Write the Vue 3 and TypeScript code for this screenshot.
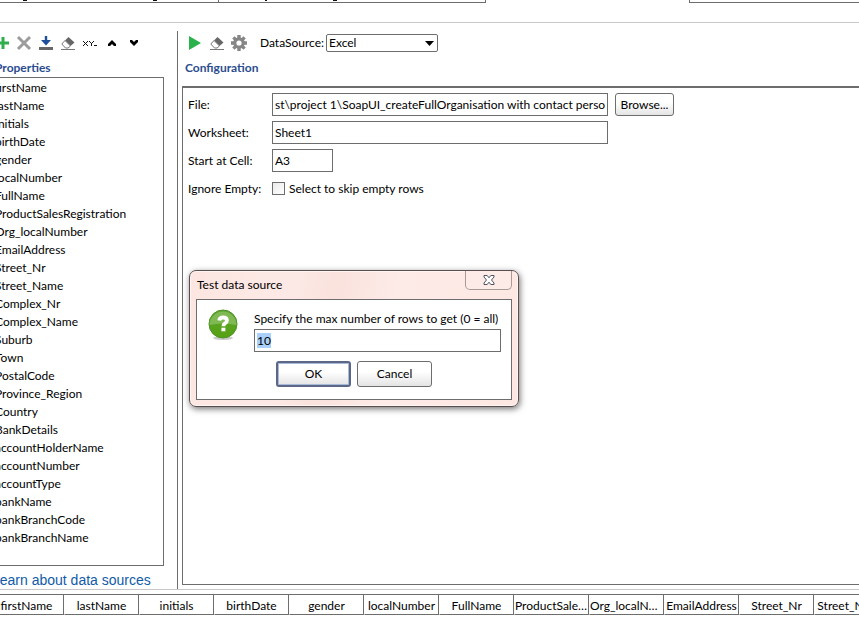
<script setup lang="ts">
import { onMounted, ref } from 'vue'

const properties: string[] = [
  'firstName', 'lastName', 'initials', 'birthDate', 'gender', 'localNumber', 'FullName',
  'ProductSalesRegistration', 'Org_localNumber', 'EmailAddress', 'Street_Nr', 'Street_Name',
  'Complex_Nr', 'Complex_Name', 'Suburb', 'Town', 'PostalCode', 'Province_Region', 'Country',
  'BankDetails', 'accountHolderName', 'accountNumber', 'accountType', 'bankName',
  'bankBranchCode', 'bankBranchName',
]
const columns: string[] = [
  'firstName', 'lastName', 'initials', 'birthDate', 'gender', 'localNumber', 'FullName',
  'ProductSalesRegistration', 'Org_localNumber', 'EmailAddress', 'Street_Nr', 'Street_Name',
]

const source = ref('Excel')
const file = ref('st\\project 1\\SoapUI_createFullOrganisation with contact persons')
const worksheet = ref('Sheet1')
const startCell = ref('A3')
const ignoreEmpty = ref(false)
const maxRows = ref('10')
const maxRowsInput = ref<HTMLInputElement | null>(null)

onMounted(() => {
  maxRowsInput.value?.focus()
  maxRowsInput.value?.select()
})
</script>

<template>
  <div class="window">
    <div class="tabs">
      <div class="tab tab-first">
        <svg width="218" height="2" viewBox="0 0 218 2"><path d="M23 .5h4M153 .5h4" stroke="#111" /></svg>
      </div>
      <div class="tab tab-second">
        <svg width="266" height="2" viewBox="0 0 266 2"><path d="M46 .5h2M114 .5h4" stroke="#111" /></svg>
      </div>
      <div class="tab-space"></div>
      <div class="tab tab-last"></div>
    </div>

    <main class="workspace">
      <section class="properties">
        <div class="toolbar">
          <button class="tool" type="button" aria-label="Add property">
            <svg width="16" height="16" viewBox="0 0 16 16"><path d="M9 2v12M3 8h12" stroke="#2fae4e" stroke-width="3" /></svg>
          </button>
          <button class="tool" type="button" aria-label="Remove property">
            <svg width="16" height="16" viewBox="0 0 16 16"><path d="M2 2l12 12M14 2L2 14" stroke="#9c9c9c" stroke-width="3" /></svg>
          </button>
          <button class="tool" type="button" aria-label="Load properties">
            <svg width="16" height="16" viewBox="0 0 16 16"><path d="M6.800 1h2.400v4H13L8 10.500 3 5h3.800z" fill="#1c4f9c" /><path d="M1 12h14v3H1z" fill="#666" /></svg>
          </button>
          <button class="tool" type="button" aria-label="Clear properties">
            <svg width="16" height="16" viewBox="0 0 16 16"><path d="M1 14.500h14" stroke="#777" /><path d="M8.500 2L14.500 7.500 10.500 11 5 5.500z" fill="#666" /><path d="M5 5.500L10.500 11 8 13H5.500L1.800 9z" fill="#fff" stroke="#777" /></svg>
          </button>
          <button class="tool" type="button" aria-label="Sort properties">
            <svg width="16" height="16" viewBox="0 0 16 16" shape-rendering="crispEdges"><path d="M1 6h1v1h1v1h1v-1h1v-1h1v1h-1v1h-1v1h1v1h1v1h-1v-1h-1v-1h-1v1h-1v1h-1v-1h1v-1h1v-1h-1v-1h-1zM7 6h1v1h1v1h1v-1h1v-1h1v1h-1v1h-1v3h-1v-3h-1v-1h-1zM12 10h3v1h-3z" fill="#111" /></svg>
          </button>
          <button class="tool" type="button" aria-label="Move up">
            <svg width="16" height="16" viewBox="0 0 16 16"><path d="M8 5L12 9v2h-2L8 9 6 11H4V9z" fill="#000" /></svg>
          </button>
          <button class="tool" type="button" aria-label="Move down">
            <svg width="16" height="16" viewBox="0 0 16 16"><path d="M8 11L4 7V5h2l2 2 2-2h2v2z" fill="#000" /></svg>
          </button>
        </div>
        <h2 class="heading">Properties</h2>
        <ul class="list">
          <li v-for="name in properties" :key="name">{{ name }}</li>
        </ul>
        <a class="learn" href="#">Learn about data sources</a>
      </section>

      <section class="config">
        <div class="toolbar">
          <button class="tool" type="button" aria-label="Run">
            <svg width="16" height="16" viewBox="0 0 16 16"><path d="M2 1l12 7L2 15z" fill="#2bb24c" /></svg>
          </button>
          <button class="tool" type="button" aria-label="Clear">
            <svg width="16" height="16" viewBox="0 0 16 16"><path d="M1 14.500h14" stroke="#777" /><path d="M8.500 2L14.500 7.500 10.500 11 5 5.500z" fill="#666" /><path d="M5 5.500L10.500 11 8 13H5.500L1.800 9z" fill="#fff" stroke="#777" /></svg>
          </button>
          <button class="tool" type="button" aria-label="Options">
            <svg width="16" height="16" viewBox="0 0 16 16"><g stroke="#868686" stroke-width="3.400"><path d="M8 0v16M0 8h16M2.400 2.400l11.200 11.200M13.600 2.400L2.400 13.600" /></g><circle cx="8" cy="8" r="5.800" fill="#868686" /><circle cx="8" cy="8" r="2.600" fill="#fff" /></svg>
          </button>
          <label class="source-label" for="source">DataSource:</label>
          <span class="combo">
            <select id="source" v-model="source">
              <option>Excel</option>
            </select>
            <svg class="caret" width="9" height="5" viewBox="0 0 9 5"><path d="M0 0h9L4.500 5z" fill="#000" /></svg>
          </span>
        </div>
        <h2 class="heading">Configuration</h2>
        <form class="form" @submit.prevent>
          <label for="file">File:</label>
          <div class="field">
            <input id="file" v-model="file" class="text wide" type="text" />
            <button class="button browse" type="button">Browse...</button>
          </div>
          <label for="worksheet">Worksheet:</label>
          <div class="field"><input id="worksheet" v-model="worksheet" class="text wide" type="text" /></div>
          <label for="cell">Start at Cell:</label>
          <div class="field"><input id="cell" v-model="startCell" class="text cell" type="text" /></div>
          <span class="caption">Ignore Empty:</span>
          <label class="field check">
            <input v-model="ignoreEmpty" type="checkbox" />
            Select to skip empty rows
          </label>
        </form>
      </section>
    </main>

    <div class="data">
      <table>
        <thead>
          <tr>
            <th v-for="name in columns" :key="name" scope="col">{{ name }}</th>
          </tr>
        </thead>
      </table>
    </div>

    <div class="dialog" role="dialog" aria-labelledby="dialog-title">
      <header class="titlebar">
        <h1 id="dialog-title">Test data source</h1>
        <button class="close" type="button" aria-label="Close">
          <svg width="12" height="10" viewBox="0 0 12 10"><path d="M1 .5h3.200L6 2.800 7.800.5H11V2L8.500 5 11 8v1.500H7.800L6 7.200 4.200 9.500H1V8l2.500-3L1 2z" fill="#fff" stroke="#4d5262" /></svg>
        </button>
      </header>
      <form class="prompt" @submit.prevent>
        <svg class="question" width="32" height="32" viewBox="0 0 32 32">
          <defs>
            <linearGradient id="green" x1="0" y1="0" x2="0" y2="1">
              <stop offset="0" stop-color="#5da52e" /><stop offset="1" stop-color="#56a112" />
            </linearGradient>
          </defs>
          <ellipse cx="16" cy="29" rx="10" ry="2" fill="#999" opacity=".5" />
          <circle cx="16" cy="15" r="14" fill="url(#green)" stroke="#4c9125" />
          <path d="M2.500 16a13.500 13.500 0 0 1 27 0Q16 13 2.500 16z" fill="#8cc063" opacity=".75" />
          <path d="M12.200 11.500q.5-3 3.900-3 3.800 0 3.800 3 0 1.800-1.900 2.900-1.600.9-1.600 2.800" fill="none" stroke="#fff" stroke-width="3.800" />
          <path d="M14.400 18.700h4v3.600h-4z" fill="#fff" />
        </svg>
        <div class="prompt-body">
          <label for="rows">Specify the max number of rows to get (0 = all)</label>
          <input id="rows" ref="maxRowsInput" v-model="maxRows" class="text" type="text" />
          <div class="actions">
            <button class="button ok" type="submit">OK</button>
            <button class="button" type="button">Cancel</button>
          </div>
        </div>
      </form>
    </div>
  </div>
</template>

<style>
body {
  background: #fff;
  overflow: hidden;
}
</style>

<style scoped>
.window,
.window * {
  box-sizing: border-box;
}
.window {
  position: relative;
  display: flex;
  flex-direction: column;
  min-height: 100vh;
  overflow: hidden;
  background: #fff;
  color: #000;
  font: 12px/16px Lato, "Open Sans", sans-serif;
}
button,
input,
select {
  font: inherit;
  color: inherit;
  margin: 0;
}
h1,
h2 {
  margin: 0;
  font-size: 12px;
  font-weight: 400;
}

.tabs {
  display: flex;
  flex: none;
  height: 23px;
  border-bottom: 1px solid #c8c8c8;
}
.tab {
  height: 3px;
  border: 0 solid #6d6d6d;
  border-bottom-width: 1px;
}
.tab svg {
  display: block;
}
.tab-first {
  width: 219px;
  border-right-width: 1px;
}
.tab-second {
  width: 267px;
  border-right-width: 1px;
}
.tab-space {
  width: 203px;
}
.tab-last {
  flex: 1;
  border-left-width: 1px;
}

.workspace {
  display: flex;
  flex: none;
  padding-top: 8px;
  border-bottom: 1px solid #c8c8c8;
}
.properties {
  display: flex;
  flex-direction: column;
  flex: none;
  width: 186px;
  margin-left: -8px;
  padding-right: 13px;
  border-right: 1px solid #6d6d6d;
}
.toolbar {
  display: flex;
  align-items: center;
  gap: 6px;
  height: 24px;
}
.tool {
  display: flex;
  flex: none;
  width: 16px;
  height: 16px;
  padding: 0;
  border: 0;
  background: none;
}
.properties .toolbar {
  padding-left: 2px;
}
.heading {
  height: 22px;
  padding-left: 3px;
  line-height: 26px;
  font-weight: 700;
  color: #2b4d8f;
}
.list {
  flex: 1;
  margin: 0;
  padding: 1px 2px 18px;
  border: 1px solid #6d6d6d;
  list-style: none;
}
.list li {
  height: 18px;
  line-height: 18px;
}
.learn {
  height: 23px;
  color: #0f5ba8;
  font: 14px/28px "Liberation Sans", Arial, sans-serif;
  text-decoration: none;
  white-space: nowrap;
}

.config {
  display: flex;
  flex-direction: column;
  flex: 1;
  min-width: 0;
  padding: 0 0 4px 4px;
}
.config .toolbar {
  padding-left: 5px;
}
.source-label {
  width: 60px;
  margin-left: 7px;
}
.combo {
  position: relative;
  display: flex;
  width: 112px;
}
.combo select {
  width: 100%;
  height: 18px;
  padding: 0 2px;
  border: 1px solid #6d6d6d;
  border-radius: 2px;
  background: #fff;
  appearance: none;
  line-height: 16px;
}
.caret {
  position: absolute;
  top: 7px;
  right: 4px;
  pointer-events: none;
}
.form {
  display: grid;
  flex: 1;
  grid-template-columns: 84px 1fr;
  grid-auto-rows: 23px;
  align-content: start;
  align-items: center;
  row-gap: 5px;
  margin-top: 9px;
  padding: 5px 5px;
  border: 1px solid #6d6d6d;
  border-top-width: 2px;
  border-right: 0;
}
.field {
  display: flex;
  align-items: center;
  gap: 7px;
}
.text {
  height: 23px;
  padding: 0 2px;
  border: 1px solid #6d6d6d;
  border-radius: 0;
  background: #fff;
  outline: 0;
}
.wide {
  width: 336px;
}
.cell {
  width: 61px;
}
.check {
  gap: 4px;
}
.check input {
  width: 13px;
  height: 13px;
  border: 1px solid #6d6d6d;
  background: linear-gradient(135deg, #eaeaea, #fff);
  appearance: none;
}
.check input:checked {
  background: #4c6a9c;
}
.button {
  width: 75px;
  height: 26px;
  padding: 0;
  border: 1px solid #6d6d6d;
  border-radius: 3px;
  background: linear-gradient(#fff 40%, #e4e4e4);
  text-align: center;
}
.browse {
  width: 59px;
  height: 23px;
}

.data {
  margin: 4px 0 0 -11px;
}
table {
  width: 900px;
  table-layout: fixed;
  border-collapse: separate;
  border-spacing: 0;
  border-top: 1px solid #6d6d6d;
}
th {
  height: 20px;
  padding: 2px 0 0;
  border-left: 1px solid #fff;
  border-right: 1px solid #6d6d6d;
  border-bottom: 1px solid #6d6d6d;
  font-weight: 400;
  line-height: 16px;
  text-align: center;
  overflow: hidden;
  text-overflow: ellipsis;
  white-space: nowrap;
}

.dialog {
  position: absolute;
  top: 270px;
  left: 189px;
  width: 330px;
  padding: 0 6px 6px;
  border: 1px solid #5c4e4e;
  border-radius: 7px;
  background: linear-gradient(100deg, #fde6e2, #fce9e5 30%, #fae2dd 42%, #fdebe7 60%, #fde7e2);
  box-shadow: 1px 2px 6px rgba(0, 0, 0, 0.55), inset 0 0 0 1px #fff5f2;
}
.titlebar {
  display: flex;
  align-items: flex-start;
  justify-content: space-between;
  height: 28px;
}
.titlebar h1 {
  padding-left: 1px;
  line-height: 28px;
}
.close {
  display: flex;
  align-items: center;
  justify-content: center;
  width: 47px;
  height: 19px;
  padding: 0;
  border: 1px solid #a99a9a;
  border-top: 0;
  border-radius: 0 0 5px 5px;
  background: #fdebe8;
}
.prompt {
  display: flex;
  gap: 15px;
  padding: 9px 10px 12px;
  border: 1px solid #6d6d6d;
  background: #fff;
}
.question {
  flex: none;
}
.prompt-body {
  display: flex;
  flex-direction: column;
  flex: 1;
  min-width: 0;
  white-space: nowrap;
}
.prompt-body label {
  height: 20px;
  line-height: 20px;
}
.actions {
  display: flex;
  gap: 6px;
  padding: 9px 0 0 22px;
}
.ok {
  border: 2px solid #5b6785;
  box-shadow: inset 0 0 0 1px #a9b9da;
}
#rows::selection {
  background: #a9d1fb;
  color: #000;
}
</style>
